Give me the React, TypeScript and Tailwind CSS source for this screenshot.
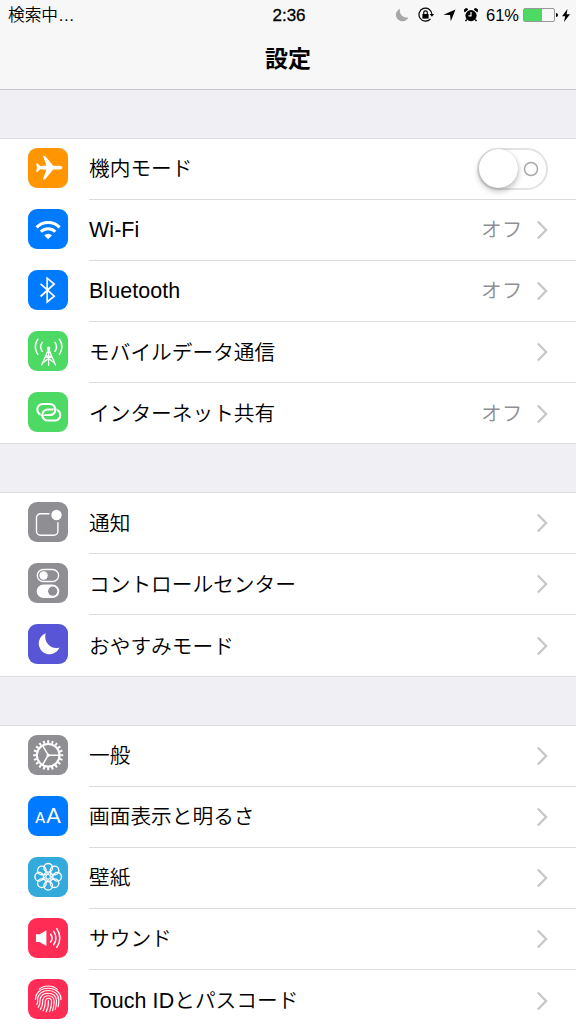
import type { ReactNode } from "react";

interface SettingsItem {
  label: ReactNode;
  color: string;
  icon: ReactNode;
  value?: string;
  toggle?: boolean;
}

function polar(cx: number, cy: number, r: number, deg: number) {
  const a = (deg * Math.PI) / 180;
  return { x: cx + r * Math.cos(a), y: cy + r * Math.sin(a) };
}

function Latin({ children }: { children: ReactNode }) {
  return <span className="text-[21.4px] tracking-[0.1px]">{children}</span>;
}

function Glyph({ children }: { children: ReactNode }) {
  return (
    <svg viewBox="0 0 40 40" className="size-10" fill="none" stroke="white" strokeLinecap="round" strokeLinejoin="round">
      {children}
    </svg>
  );
}

const airplane = (
  <Glyph>
    <path
      fill="white"
      stroke="none"
      d="M34.4 19.6c0-1.2-1.2-1.9-3-1.9h-6.200L17.400 8.200c-.6-.7-2.600-.8-2.300.3l3.300 9-6.200.4-2.500-2.400c-.5-.4-1.500-.3-1.400.3l.6 3.800-.6 3.800c-.1.600.9.700 1.400.3l2.500-2.400 6.200.4-3.300 9c-.3 1.100 1.700 1 2.300.3l7.800-9.500h6.200c1.800 0 3-.7 3-1.900z"
    />
  </Glyph>
);

const wifi = (
  <Glyph>
    <g strokeWidth="3" strokeLinecap="butt">
      <path d="M8.6 18.4a16.2 16.2 0 0 1 23 0" />
      <path d="M12.9 22.7a10.2 10.2 0 0 1 14.4 0" />
    </g>
    <path d="M16.2 26.3a5.6 5.6 0 0 1 7.8 0l-3.9 3.9z" fill="white" stroke="none" />
  </Glyph>
);

const bluetooth = (
  <Glyph>
    <path d="M12.6 13.9l13.6 12.3-7 5.800V8.200l7 5.800-13.600 12.500" strokeWidth="1.7" strokeLinejoin="miter" strokeLinecap="butt" />
  </Glyph>
);

const cellular = (
  <Glyph>
    <g strokeWidth="1.5">
      <path d="M9.8 8.2a13 13 0 0 0 0 15.2M14.2 11.4a7.6 7.6 0 0 0 0 8.8" />
      <path d="M31.4 8.2a13 13 0 0 1 0 15.2M27 11.4a7.6 7.6 0 0 1 0 8.8" />
    </g>
    <circle cx="20.6" cy="17.2" r="1.7" fill="white" stroke="none" />
    <path d="M20.6 17v17.4M20.6 18l-6.9 16M20.6 18l6.9 16M17.6 25.2l8.4 6.4M23.6 25.2l-8.4 6.4M17.6 25.2h6" strokeWidth="1.3" />
  </Glyph>
);

const hotspot = (
  <Glyph>
    <g strokeWidth="2.1">
      <rect x="9.3" y="12" width="18" height="11" rx="5.5" />
      <path d="M14.3 23.4a5.500 5.500 0 0 1 5.500-5.500h4" stroke="#4cd964" strokeWidth="4" strokeLinecap="butt" />
      <rect x="14.3" y="17.5" width="18" height="11" rx="5.5" />
      <path d="M25.700 21.400a5.500 5.500 0 0 0 1.600-3.900" stroke="#4cd964" strokeWidth="4" strokeLinecap="butt" />
      <path d="M23.600 22.700a5.500 5.500 0 0 0 3.700-5.200" />
    </g>
  </Glyph>
);

const notifications = (
  <Glyph>
    <path d="M21.4 11.8h-8.9a4 4 0 0 0-4 4v13.4a4 4 0 0 0 4 4h13.4a4 4 0 0 0 4-4v-9" strokeWidth="1.4" strokeLinecap="butt" />
    <circle cx="28.5" cy="13" r="5.2" fill="white" stroke="none" />
  </Glyph>
);

const controlCenter = (
  <Glyph>
    <rect x="9.3" y="6.5" width="21.3" height="12" rx="6" strokeWidth="1.3" />
    <circle cx="15.6" cy="12.5" r="4.2" fill="white" stroke="none" />
    <rect x="8.7" y="21.4" width="22.6" height="13.6" rx="6.8" fill="white" stroke="none" />
    <circle cx="24.7" cy="28.2" r="4.6" fill="#8e8e93" stroke="none" />
  </Glyph>
);

const moon = (
  <Glyph>
    <path d="M17.800 9.300a10.800 10.800 0 1 0 13.700 14.300A11.200 11.200 0 0 1 17.800 9.300z" fill="white" stroke="none" />
  </Glyph>
);

const gear = (
  <Glyph>
    <circle cx="20.2" cy="20.2" r="11.3" strokeWidth="2" />
    {Array.from({ length: 20 }, (_, i) => {
      const a = polar(20.2, 20.2, 12, i * 18);
      const b = polar(20.2, 20.2, 15, i * 18);
      return <line key={i} x1={a.x} y1={a.y} x2={b.x} y2={b.y} strokeWidth="2" strokeLinecap="butt" />;
    })}
    {[0, 120, 240].map((deg) => {
      const end = polar(20.2, 20.2, 11, deg);
      return <line key={deg} x1="20.2" y1="20.2" x2={end.x} y2={end.y} strokeWidth="1.5" />;
    })}
    <circle cx="20.2" cy="20.2" r="1.6" fill="white" stroke="none" />
  </Glyph>
);

const display = (
  <span className="flex items-baseline justify-center gap-px font-['Lato','Liberation_Sans',sans-serif] font-normal leading-none text-white">
    <span className="text-[14.5px] font-medium">A</span>
    <span className="text-[21.5px]">A</span>
  </span>
);

const wallpaper = (
  <Glyph>
    {Array.from({ length: 8 }, (_, i) => {
      const c = polar(20.2, 19.8, 9, i * 45);
      return <circle key={i} cx={c.x} cy={c.y} r="4.3" strokeWidth="1.35" />;
    })}
    {Array.from({ length: 8 }, (_, i) => {
      const a = polar(20.2, 19.8, 2.6, i * 45);
      const b = polar(20.2, 19.8, 6.5, i * 45 + 22.5);
      const c = polar(20.2, 19.8, 6.5, i * 45 - 22.5);
      return <path key={i} d={`M${c.x} ${c.y}L${a.x} ${a.y}L${b.x} ${b.y}`} strokeWidth="1" />;
    })}
    <circle cx="20.2" cy="19.8" r="2.3" strokeWidth="1" />
  </Glyph>
);

const sound = (
  <Glyph>
    <path d="M8 16.2h3.6l6.8-3.9v15.6l-6.8-3.9H8z" fill="white" stroke="none" />
    <g strokeWidth="1.5">
      <path d="M22.600 16.200a6.400 6.400 0 0 1 0 7.800" />
      <path d="M25.700 13.400a11 11 0 0 1 0 13.200" />
      <path d="M28.800 10.800a15.500 15.500 0 0 1 0 18.400" />
    </g>
  </Glyph>
);

const fingerprint = (
  <Glyph>
    <g strokeWidth="1.15">
      <path d="M11.2 10.200c5-4.300 13-4.300 18 0" />
      <path d="M7.500 20.500c0-7 5.700-11.300 12.700-11.300S33 13.500 33 20.500" />
      <path d="M8.8 25.5c1.600-2.500.4-4 1-7 1-4.200 5.400-7 10.400-7 6 0 10.600 3.800 10.600 9.700 0 2.500-.2 4.400-.6 6.500" />
      <path d="M10.3 28.3c2.600-4 1-5.800 2-9 1.100-3.200 4.400-5.100 7.900-5.100 4.700 0 8.300 3 8.300 7.500 0 3.500-.4 6-1.200 8.700" />
      <path d="M12.4 30.4c3.200-4.800 1.600-7 2.600-10.200.8-2.200 3-3.500 5.200-3.500 3.300 0 5.900 2.100 5.900 5.600 0 3.800-.6 6.500-1.500 9.500" />
      <path d="M15.1 31.8c3-4.900 1.700-7.400 2.400-10.400.4-1.400 1.500-2.200 2.800-2.200 2 0 3.300 1.400 3.300 3.500 0 3.800-.8 6.800-2 9.900" />
      <path d="M18.2 32.700c2.200-4 2.400-7 2.200-10.900" />
    </g>
  </Glyph>
);

const GROUPS: SettingsItem[][] = [
  [
    { label: "機内モード", color: "bg-[#ff9500]", icon: airplane, toggle: true },
    { label: <Latin>Wi-Fi</Latin>, color: "bg-[#007aff]", icon: wifi, value: "オフ" },
    { label: <Latin>Bluetooth</Latin>, color: "bg-[#007aff]", icon: bluetooth, value: "オフ" },
    { label: "モバイルデータ通信", color: "bg-[#4cd964]", icon: cellular },
    { label: "インターネット共有", color: "bg-[#4cd964]", icon: hotspot, value: "オフ" },
  ],
  [
    { label: "通知", color: "bg-[#8e8e93]", icon: notifications },
    { label: "コントロールセンター", color: "bg-[#8e8e93]", icon: controlCenter },
    { label: "おやすみモード", color: "bg-[#5856d6]", icon: moon },
  ],
  [
    { label: "一般", color: "bg-[#8e8e93]", icon: gear },
    { label: "画面表示と明るさ", color: "bg-[#007aff]", icon: display },
    { label: "壁紙", color: "bg-[#34aadc]", icon: wallpaper },
    { label: "サウンド", color: "bg-[#ff2d55]", icon: sound },
    { label: <><Latin>Touch ID</Latin>とパスコード</>, color: "bg-[#ff2d55]", icon: fingerprint },
  ],
];

function Chevron() {
  return (
    <svg viewBox="0 0 12 20" className="ml-[13.5px] h-5 w-3 shrink-0" fill="none" stroke="#c7c7cc" strokeWidth="2.4">
      <path d="M1.8 1.5l8.3 8.5-8.3 8.5" />
    </svg>
  );
}

function Toggle() {
  return (
    <span className="flex h-[42px] w-[71px] items-center justify-between rounded-full border-2 border-[#e3e3e3] pr-[7px]">
      <span className="size-[39px] shrink-0 rounded-full bg-white shadow-[0_3px_6px_rgba(0,0,0,0.28),0_0_1px_rgba(0,0,0,0.2)]" />
      <svg viewBox="0 0 16 16" className="size-4" fill="none" stroke="#a9a9a9" strokeWidth="1.5">
        <circle cx="8" cy="8" r="6.5" />
      </svg>
    </span>
  );
}

function Row({ item, last }: { item: SettingsItem; last: boolean }) {
  return (
    <div className="flex h-[61.15px] pl-7">
      <div className={`mt-[9px] flex size-10 shrink-0 items-center justify-center rounded-[9px] ${item.color}`}>{item.icon}</div>
      <div className={`ml-[21px] flex flex-1 items-center pr-7 ${last ? "" : "border-b border-[#dcdce0]"}`}>
        <span className="flex-1 whitespace-nowrap">{item.label}</span>
        {item.value && <span className="text-[#8e8e93]">{item.value}</span>}
        {item.toggle ? <Toggle /> : <Chevron />}
      </div>
    </div>
  );
}

function StatusBar() {
  return (
    <div className="grid h-[30px] grid-cols-[1fr_auto_1fr] items-center pl-2 pr-1.5 text-[16.7px] leading-none">
      <span className="pt-0.5">検索中…</span>
      <span className="text-[17px] [-webkit-text-stroke:0.3px_black]">2:36</span>
      <div className="flex items-center justify-end">
        <svg viewBox="0 0 14 14" className="mr-2 size-3.5" fill="#a8a8aa">
          <path d="M5 .8a6.5 6.5 0 1 0 8.4 8.6A7 7 0 0 1 5 .8z" />
        </svg>
        <svg viewBox="0 0 18 16" className="mr-2 h-4 w-[18px]" fill="none" stroke="black" strokeWidth="1.2">
          <path d="M13.5 11.8a6.5 6.5 0 1 1 1.5-4.2" />
          <path d="M12.7 7h4.4l-2.2 2.8z" fill="black" stroke="none" />
          <rect x="5.4" y="7" width="6.2" height="4.6" fill="black" stroke="none" />
          <path d="M6.7 7V5.700a1.800 1.800 0 0 1 3.600 0V7" />
        </svg>
        <svg viewBox="0 0 13 13" className="mr-2 size-[13px]">
          <path d="M12.5.5L7.8 12.3l-.7-6.200L.5 5.700z" />
        </svg>
        <svg viewBox="0 0 14 14" className="mr-2 size-3.5">
          <circle cx="7" cy="7.6" r="5.6" />
          <path d="M.7 3.8a2 2 0 0 1 3.200-2.400zM13.300 3.800a2 2 0 0 0-3.200-2.400z" stroke="black" strokeWidth="1" />
          <path d="M2.700 11.500l-1.200 1.700M11.300 11.500l1.200 1.700" stroke="black" strokeWidth="1.4" />
          <path d="M7 4v3.800H4.500" fill="none" stroke="white" strokeWidth="1.2" />
        </svg>
        <span className="text-[16.5px]">61%</span>
        <div className="ml-1 h-3.5 w-8 rounded-[2px] border border-[#999]">
          <div className="h-full w-[60%] bg-[#4cd964]" />
        </div>
        <span className="ml-px h-1 w-0.5 rounded-r-full bg-black" />
        <svg viewBox="0 0 8 13" className="ml-1 h-[13px] w-2">
          <path d="M5.5 0L0 7.300h3.200L2 13l6-7.700H4.600z" />
        </svg>
      </div>
    </div>
  );
}

export default function App() {
  return (
    <div className="h-[1024px] w-[576px] overflow-hidden bg-[#efeff4] font-['Liberation_Sans','Noto_Sans_CJK_JP',sans-serif] text-[20.7px] font-[350] text-black">
      <header className="h-[90px] border-b border-[#c4c4c8] bg-[#f7f7f8]">
        <StatusBar />
        <h1 className="pt-3 text-center text-[23px] leading-[34px] font-bold">設定</h1>
      </header>
      <main className="flex flex-col gap-[48.9px] pt-[48.6px]">
        {GROUPS.map((group, i) => (
          <section key={i} className="bg-white shadow-[0_-1px_0_#dcdce0,inset_0_-1px_0_#dcdce0]">
            {group.map((item, j) => (
              <Row key={j} item={item} last={j === group.length - 1} />
            ))}
          </section>
        ))}
      </main>
    </div>
  );
}
